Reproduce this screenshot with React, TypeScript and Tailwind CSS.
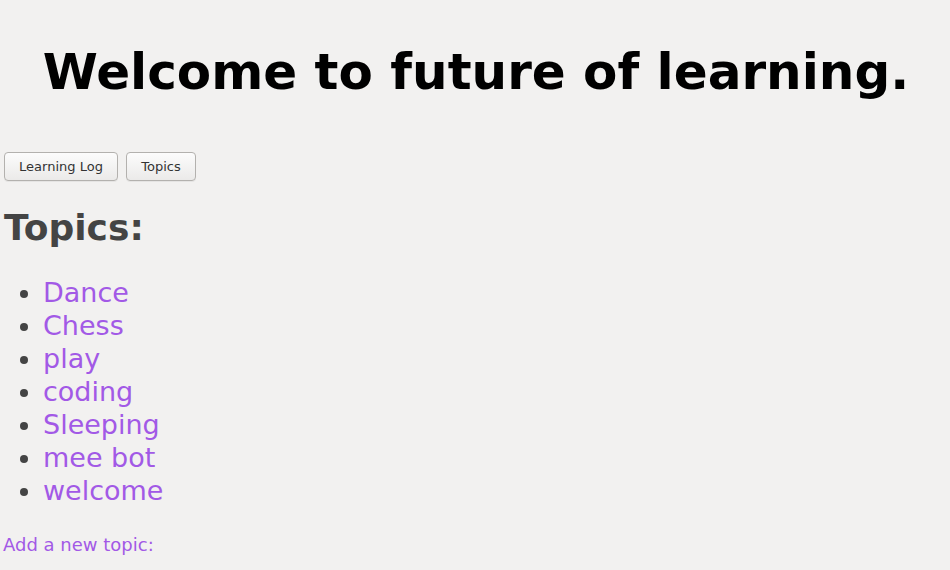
export default function App() {
  const topics = ["Dance", "Chess", "play", "coding", "Sleeping", "mee bot", "welcome"];

  return (
    <div className="min-h-screen bg-[#f2f1f0] px-[4px] pt-[43px] font-['DejaVu_Sans',sans-serif] text-[#444]">
      <h1 className="pl-[2px] text-center text-[50px] font-bold leading-[58px] text-black">
        Welcome to future of learning.
      </h1>

      <div className="mt-[51px] flex gap-2">
        <button className="h-[29px] w-[114px] rounded-[4px] border border-[#b3b1ae] bg-gradient-to-b from-[#fcfcfc] to-[#ebeae9] text-[13px] text-[#333] shadow-[0_1px_0_rgba(0,0,0,0.05)]">
          Learning Log
        </button>
        <button className="h-[29px] w-[70px] rounded-[4px] border border-[#b3b1ae] bg-gradient-to-b from-[#fcfcfc] to-[#ebeae9] text-[13px] text-[#333] shadow-[0_1px_0_rgba(0,0,0,0.05)]">
          Topics
        </button>
      </div>

      <h2 className="mt-[26px] text-[36px] font-bold leading-[42px] text-[#444]">Topics:</h2>

      <ul className="mt-[27px] list-disc pl-[39px] text-[27px] leading-[33px]">
        {topics.map((t) => (
          <li key={t}>
            <a href="#" className="text-[#a259e6]">
              {t}
            </a>
          </li>
        ))}
      </ul>

      <p className="-ml-px mt-[27px] text-[18px] leading-[21px] text-[#a259e6]">Add a new topic:</p>
    </div>
  );
}
